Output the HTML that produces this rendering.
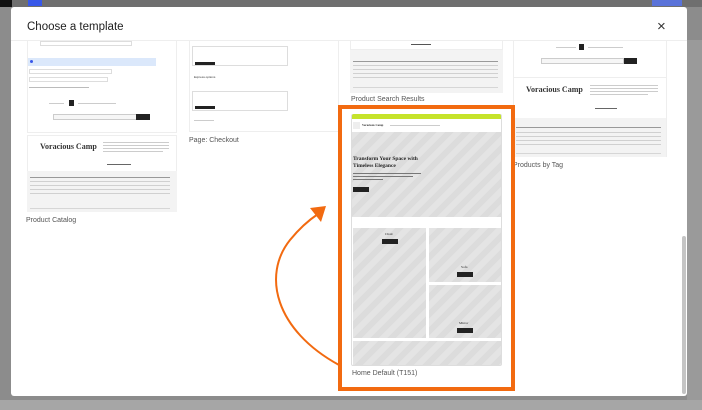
<!DOCTYPE html>
<html><head><meta charset="utf-8"><style>
*{margin:0;padding:0;box-sizing:border-box}
body{width:702px;height:410px;overflow:hidden;background:#8c8c8c;font-family:"Liberation Sans",sans-serif;position:relative}
.a{position:absolute}
.t{font-size:7px;color:#555}
.ln{position:absolute;height:1px;background:#bbb}
.ft{position:absolute;background:#f3f3f3}
.stripe{background:repeating-linear-gradient(135deg,#e4e4e4 0 6px,#dcdcdc 6px 12px)}
.btn{position:absolute;background:#222;height:5px;width:16px}
.vc{position:absolute;font:bold 8px "Liberation Serif",serif;color:#333}
</style></head><body>
<div class="a" style="left:0;top:0;width:702px;height:7px;background:#6f6f6f"></div>
<div class="a" style="left:0;top:0;width:12px;height:7px;background:#111"></div>
<div class="a" style="left:28px;top:0;width:14px;height:6px;background:#3858e9"></div>
<div class="a" style="left:652px;top:0;width:30px;height:6px;background:#5a73d9"></div>
<div class="a" style="left:687px;top:40px;width:15px;height:360px;background:#9a9a9a"></div>
<div class="a" style="left:0;top:400px;width:702px;height:10px;background:#a6a6a6"></div>
<div class="a" style="left:11px;top:7px;width:676px;height:389px;background:#fff;border-radius:3px"></div>
<div class="a" style="left:27px;top:21px;font-size:11.5px;color:#1e1e1e">Choose a template</div>
<div class="a" style="left:657px;top:18px;font-size:15px;color:#333">×</div>
<div class="a" style="left:11px;top:40px;width:676px;height:1px;background:#eee"></div>
<div class="a" style="left:682px;top:236px;width:4px;height:158px;background:#c4c4c4;border-radius:2px"></div>

<div class="a" style="left:27px;top:41px;width:150px;height:92px;border:1px solid #eee;border-top:0"></div>
<div class="a" style="left:40px;top:41px;width:92px;height:5px;border:1px solid #ddd"></div>
<div class="a" style="left:28px;top:58px;width:128px;height:8px;background:#dbe8fb"></div>
<div class="a" style="left:30px;top:60px;width:3px;height:3px;border-radius:50%;background:#3858e9"></div>
<div class="a" style="left:29px;top:69px;width:83px;height:5px;border:1px solid #ddd"></div>
<div class="a" style="left:29px;top:77px;width:79px;height:5px;border:1px solid #ddd"></div>
<div class="ln" style="left:29px;top:87px;width:60px"></div>
<div class="a" style="left:69px;top:100px;width:5px;height:6px;background:#222"></div>
<div class="ln" style="left:49px;top:103px;width:15px;background:#ccc"></div>
<div class="ln" style="left:78px;top:103px;width:38px;background:#ccc"></div>
<div class="a" style="left:53px;top:114px;width:84px;height:6px;border:1px solid #ccc;background:#f6f6f6"></div>
<div class="a" style="left:136px;top:114px;width:14px;height:6px;background:#222"></div>
<div class="a" style="left:27px;top:135px;width:150px;height:77px;border:1px solid #eee"></div>
<div class="vc" style="left:40px;top:142px">Voracious Camp</div>
<div class="ln" style="left:103px;top:142px;width:66px;background:#ccc"></div>
<div class="ln" style="left:103px;top:145px;width:66px;background:#ccc"></div>
<div class="ln" style="left:103px;top:148px;width:66px;background:#ccc"></div>
<div class="ln" style="left:103px;top:151px;width:60px;background:#ccc"></div>
<div class="ln" style="left:107px;top:164px;width:24px;background:#666"></div>
<div class="ft" style="left:27px;top:171px;width:150px;height:41px"></div>
<div class="ln" style="left:30px;top:181px;width:140px;background:#d0d0d0"></div>
<div class="ln" style="left:30px;top:185px;width:140px;background:#d0d0d0"></div>
<div class="ln" style="left:30px;top:189px;width:140px;background:#d0d0d0"></div>
<div class="ln" style="left:30px;top:193px;width:140px;background:#d0d0d0"></div>
<div class="ln" style="left:30px;top:177px;width:140px;background:#999"></div>
<div class="ln" style="left:30px;top:208px;width:140px;background:#d6d6d6"></div>
<div class="a t" style="left:26px;top:217px">Product Catalog</div>

<div class="a" style="left:189px;top:41px;width:150px;height:91px;border:1px solid #eee;border-top:0"></div>
<div class="a" style="left:192px;top:46px;width:96px;height:20px;border:1px solid #ddd"></div>
<div class="a" style="left:195px;top:62px;width:20px;height:3px;background:#222"></div>
<div class="a" style="left:194px;top:75px;font-size:3px;color:#333">Express options</div>
<div class="a" style="left:192px;top:91px;width:96px;height:20px;border:1px solid #ddd"></div>
<div class="a" style="left:195px;top:106px;width:20px;height:3px;background:#222"></div>
<div class="ln" style="left:194px;top:120px;width:20px;background:#ccc"></div>
<div class="a t" style="left:189px;top:137px">Page: Checkout</div>

<div class="a" style="left:350px;top:41px;width:153px;height:52px;background:#f3f3f3"></div>
<div class="a" style="left:350px;top:41px;width:153px;height:9px;background:#fff;border:1px solid #eee;border-top:0"></div>
<div class="ln" style="left:411px;top:44px;width:20px;background:#555"></div>
<div class="ln" style="left:353px;top:61px;width:145px;background:#999"></div>
<div class="ln" style="left:353px;top:65px;width:145px;background:#d0d0d0"></div>
<div class="ln" style="left:353px;top:69px;width:145px;background:#d0d0d0"></div>
<div class="ln" style="left:353px;top:73px;width:145px;background:#d0d0d0"></div>
<div class="ln" style="left:353px;top:77px;width:145px;background:#d0d0d0"></div>
<div class="ln" style="left:353px;top:87px;width:145px;background:#d6d6d6"></div>
<div class="a t" style="left:351px;top:96px">Product Search Results</div>
<div class="a" style="left:351px;top:114px;width:151px;height:252px;background:#fff;border:1px solid #ddd;border-radius:2px"></div>
<div class="a" style="left:352px;top:114px;width:149px;height:5px;background:#c5e32b;border-radius:2px 2px 0 0"></div>
<div class="a" style="left:353px;top:122px;width:7px;height:7px;background:#eee"></div>
<div class="a" style="left:362px;top:123px;font:bold 3px 'Liberation Serif';color:#333">Voracious Camp</div>
<div class="ln" style="left:390px;top:125px;width:50px;background:#ccc"></div>
<div class="stripe a" style="left:352px;top:132px;width:149px;height:85px"></div>
<div class="a" style="left:353px;top:156px;font:bold 5.5px/7px 'Liberation Serif',serif;color:#222;width:80px">Transform Your Space with Timeless Elegance</div>
<div class="ln" style="left:353px;top:173px;width:68px;background:#777"></div>
<div class="ln" style="left:353px;top:176px;width:60px;background:#777"></div>
<div class="ln" style="left:353px;top:179px;width:30px;background:#777"></div>
<div class="btn" style="left:353px;top:187px"></div>
<div class="stripe a" style="left:353px;top:228px;width:73px;height:110px"></div>
<div class="stripe a" style="left:429px;top:228px;width:72px;height:54px"></div>
<div class="stripe a" style="left:429px;top:285px;width:72px;height:53px"></div>
<div class="stripe a" style="left:353px;top:341px;width:148px;height:24px"></div>
<div class="a" style="left:385px;top:232px;font:3.5px 'Liberation Serif';color:#222">Chair</div>
<div class="btn" style="left:382px;top:239px"></div>
<div class="a" style="left:461px;top:265px;font:3.5px 'Liberation Serif';color:#222">Sofa</div>
<div class="btn" style="left:457px;top:272px"></div>
<div class="a" style="left:459px;top:321px;font:3.5px 'Liberation Serif';color:#222">Mirror</div>
<div class="btn" style="left:457px;top:328px"></div>
<div class="a t" style="left:352px;top:370px">Home Default (T151)</div>

<div class="a" style="left:513px;top:41px;width:154px;height:116px;border:1px solid #eee;border-top:0"></div>
<div class="a" style="left:579px;top:44px;width:5px;height:6px;background:#222"></div>
<div class="ln" style="left:556px;top:47px;width:20px;background:#ccc"></div>
<div class="ln" style="left:588px;top:47px;width:35px;background:#ccc"></div>
<div class="a" style="left:541px;top:58px;width:83px;height:6px;border:1px solid #ccc;background:#f6f6f6"></div>
<div class="a" style="left:624px;top:58px;width:13px;height:6px;background:#222"></div>
<div class="a" style="left:513px;top:77px;width:154px;height:1px;background:#eee"></div>
<div class="vc" style="left:526px;top:85px">Voracious Camp</div>
<div class="ln" style="left:590px;top:85px;width:68px;background:#ccc"></div>
<div class="ln" style="left:590px;top:88px;width:68px;background:#ccc"></div>
<div class="ln" style="left:590px;top:91px;width:68px;background:#ccc"></div>
<div class="ln" style="left:590px;top:94px;width:58px;background:#ccc"></div>
<div class="ln" style="left:595px;top:108px;width:22px;background:#666"></div>
<div class="ft" style="left:514px;top:118px;width:152px;height:39px"></div>
<div class="ln" style="left:516px;top:127px;width:145px;background:#999"></div>
<div class="ln" style="left:516px;top:132px;width:145px;background:#d0d0d0"></div>
<div class="ln" style="left:516px;top:136px;width:145px;background:#d0d0d0"></div>
<div class="ln" style="left:516px;top:140px;width:145px;background:#d0d0d0"></div>
<div class="ln" style="left:516px;top:144px;width:145px;background:#d0d0d0"></div>
<div class="ln" style="left:516px;top:153px;width:145px;background:#d6d6d6"></div>
<div class="a t" style="left:513px;top:162px">Products by Tag</div>

<div class="a" style="left:338px;top:105px;width:177px;height:286px;border:4px solid #f26a10"></div>
<svg class="a" style="left:0;top:0" width="702" height="410">
<path d="M339 365 C 275 330, 262 275, 290 240 Q 303 224 318 214" fill="none" stroke="#f26a10" stroke-width="2"/>
<path d="M326 206 L310 208 L321 222 Z" fill="#f26a10"/>
</svg>
</body></html>
